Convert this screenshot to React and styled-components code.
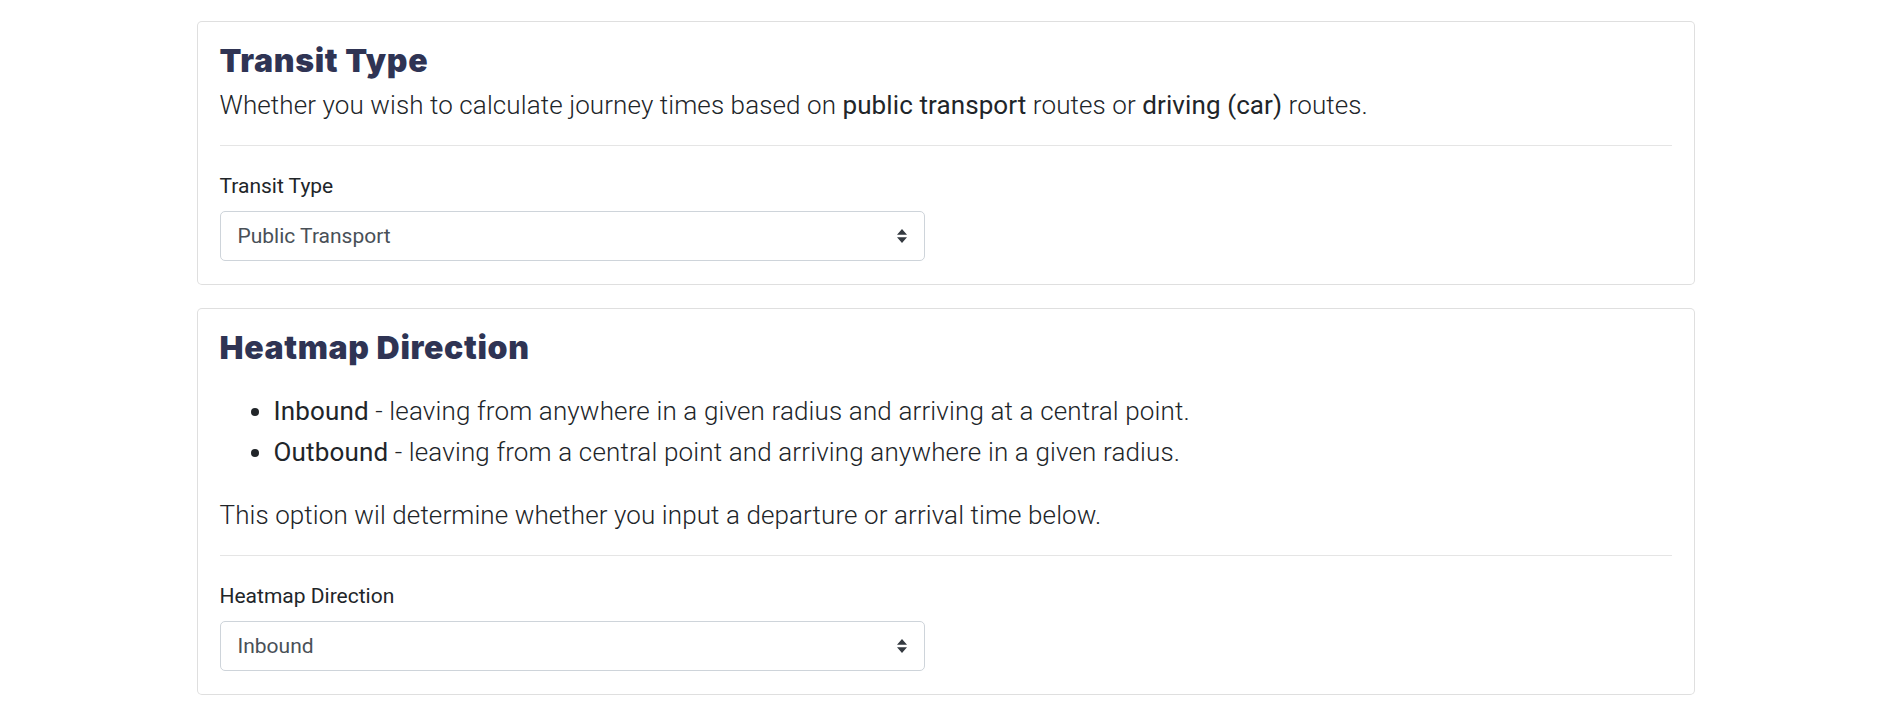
import styled, { createGlobalStyle } from "styled-components";

const GlobalStyle = createGlobalStyle`
    * {
        box-sizing: border-box;
    }

    body {
        margin: 0;
        background: #ffffff;
        font-family: "Roboto", "Segoe UI", sans-serif;
        color: #212529;
    }
`;

function Arrows() {
    return (
        <svg width="10" height="14" viewBox="0 0 4 5.6">
            <path d="M2 0L0 2.3h4zM2 5.6L0 3.3h4z" fill="#343a40" />
        </svg>
    );
}

function SelectField({ label, value, options }) {
    return (
        <FieldGroup>
            <Label>{label}</Label>
            <SelectWrap>
                <Select defaultValue={value}>
                    {options.map(o => (
                        <option key={o} value={o}>{o}</option>
                    ))}
                </Select>
                <ArrowBox>
                    <Arrows />
                </ArrowBox>
            </SelectWrap>
        </FieldGroup>
    );
}

export default function App() {
    return (
        <Page>
            <GlobalStyle />
            <Container>
                <Card>
                    <Title>Transit Type</Title>
                    <Lead>
                        Whether you wish to calculate journey times based on <strong>public transport</strong> routes or <strong>driving (car)</strong> routes.
                    </Lead>
                    <Divider />
                    <SelectField
                        label="Transit Type"
                        value="Public Transport"
                        options={["Public Transport", "Driving"]}
                    />
                </Card>

                <Card>
                    <Title>Heatmap Direction</Title>
                    <List>
                        <li><strong>Inbound</strong> - leaving from anywhere in a given radius and arriving at a central point.</li>
                        <li><strong>Outbound</strong> - leaving from a central point and arriving anywhere in a given radius.</li>
                    </List>
                    <Lead>This option wil determine whether you input a departure or arrival time below.</Lead>
                    <Divider />
                    <SelectField
                        label="Heatmap Direction"
                        value="Inbound"
                        options={["Inbound", "Outbound"]}
                    />
                </Card>
            </Container>
        </Page>
    );
}

const Page = styled.div`
    width: 100%;
    min-height: 100vh;
    padding-top: 21px;
`;

const Container = styled.div`
    width: 1498px;
    margin: 0 auto;
    display: flex;
    flex-direction: column;
    gap: 23px;
`;

const Card = styled.section`
    border: 1px solid rgba(0, 0, 0, 0.125);
    border-radius: 5px;
    padding: 22px 22px 23px 22px;
    background: #ffffff;
`;

const Title = styled.h3`
    margin: 0 0 9px 0;
    font-family: "Inter", sans-serif;
    font-weight: 900;
    font-size: 32px;
    line-height: 34px;
    color: #2f3454;
    letter-spacing: 0.65px;
`;

const Lead = styled.p`
    margin: 0;
    font-size: 26px;
    line-height: 36px;
    font-weight: 300;
    letter-spacing: 0.1px;
    color: #212529;

    strong {
        font-weight: 400;
    }
`;

const List = styled.ul`
    margin: 26px 0 24px 0;
    padding-left: 54px;
    font-size: 26px;
    line-height: 41px;
    font-weight: 300;
    letter-spacing: 0.15px;

    strong {
        font-weight: 400;
    }
`;

const Divider = styled.hr`
    margin: 22px 0 25px 0;
    border: 0;
    border-top: 1px solid rgba(0, 0, 0, 0.1);
`;

const FieldGroup = styled.div`
    display: flex;
    flex-direction: column;
    width: 705px;
`;

const Label = styled.label`
    font-size: 21px;
    line-height: 30px;
    margin-bottom: 10px;
    color: #212529;
`;

const SelectWrap = styled.div`
    position: relative;
    width: 100%;
`;

const Select = styled.select`
    appearance: none;
    -webkit-appearance: none;
    width: 100%;
    height: 50px;
    padding: 0 40px 0 17px;
    font-family: "Roboto", sans-serif;
    font-size: 21px;
    color: #495057;
    background: #ffffff;
    border: 1px solid #ced4da;
    border-radius: 5px;
    outline: none;
`;

const ArrowBox = styled.span`
    position: absolute;
    right: 18px;
    top: 50%;
    transform: translateY(-50%);
    display: flex;
    pointer-events: none;
`;
